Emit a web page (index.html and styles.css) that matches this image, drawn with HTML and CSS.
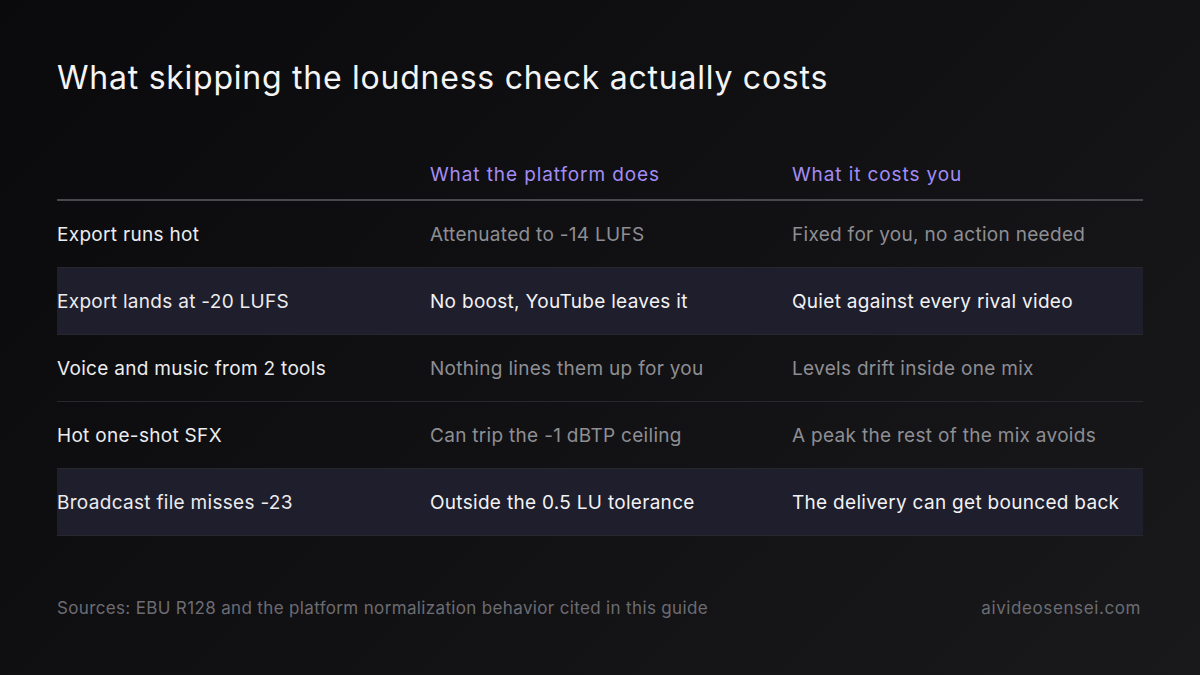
FILE: index.html
```html
<!DOCTYPE html>
<html lang="en">
<head>
<meta charset="utf-8">
<title>Loudness check costs</title>
<link rel="stylesheet" href="styles.css">
</head>
<body>
<main class="page">
  <h1 class="title">What skipping the loudness check actually costs</h1>
  <div class="table">
    <div class="row head">
      <div class="cell"></div>
      <div class="cell">What the platform does</div>
      <div class="cell">What it costs you</div>
    </div>
    <div class="row">
      <div class="cell first">Export runs hot</div>
      <div class="cell">Attenuated to -14 LUFS</div>
      <div class="cell">Fixed for you, no action needed</div>
    </div>
    <div class="row hl">
      <div class="cell first">Export lands at -20 LUFS</div>
      <div class="cell">No boost, YouTube leaves it</div>
      <div class="cell">Quiet against every rival video</div>
    </div>
    <div class="row">
      <div class="cell first">Voice and music from 2 tools</div>
      <div class="cell">Nothing lines them up for you</div>
      <div class="cell">Levels drift inside one mix</div>
    </div>
    <div class="row">
      <div class="cell first">Hot one-shot SFX</div>
      <div class="cell">Can trip the -1 dBTP ceiling</div>
      <div class="cell">A peak the rest of the mix avoids</div>
    </div>
    <div class="row hl">
      <div class="cell first">Broadcast file misses -23</div>
      <div class="cell">Outside the 0.5 LU tolerance</div>
      <div class="cell">The delivery can get bounced back</div>
    </div>
  </div>
  <footer class="footer">
    <span>Sources: EBU R128 and the platform normalization behavior cited in this guide</span>
    <span class="domain">aivideosensei.com</span>
  </footer>
</main>
</body>
</html>
```
FILE: styles.css
```css
* { box-sizing: border-box; }
html, body {
  margin: 0;
  padding: 0;
  width: 1200px;
  height: 675px;
  overflow: hidden;
}
body {
  background: linear-gradient(135deg, #0a0a0c 0%, #111114 50%, #19191c 100%);
  font-family: Inter, "Noto Sans", sans-serif;
  color: #ececee;
}
.page {
  padding: 58px 57px 0 57px;
  display: flex;
  flex-direction: column;
}
.title {
  margin: 0;
  font-size: 32px;
  line-height: 40px;
  font-weight: 400;
  color: #f4f4f5;
  letter-spacing: 0.75px;
}
.table {
  margin-top: 65px;
  display: flex;
  flex-direction: column;
}
.row {
  display: grid;
  grid-template-columns: 373px 362px 1fr;
  font-size: 19px;
  line-height: 24px;
  letter-spacing: 0.3px;
  padding: 22px 0 20px 0;
  border-bottom: 1px solid #27272c;
  color: #8e8e93;
}
.row .first { color: #ececee; }
.row.head {
  padding: 0 0 12px 0;
  border-bottom: 2px solid #48484e;
  color: #a38cf5;
  letter-spacing: 0.9px;
}
.row.hl {
  background: #1f1e2c;
  color: #f2f2f4;
}
.footer {
  margin-top: 62px;
  display: flex;
  justify-content: space-between;
  font-size: 17px;
  line-height: 20px;
  letter-spacing: 0.35px;
  color: #6c6c72;
}
.footer .domain {
  letter-spacing: 0.6px;
  margin-right: 2px;
}
```
